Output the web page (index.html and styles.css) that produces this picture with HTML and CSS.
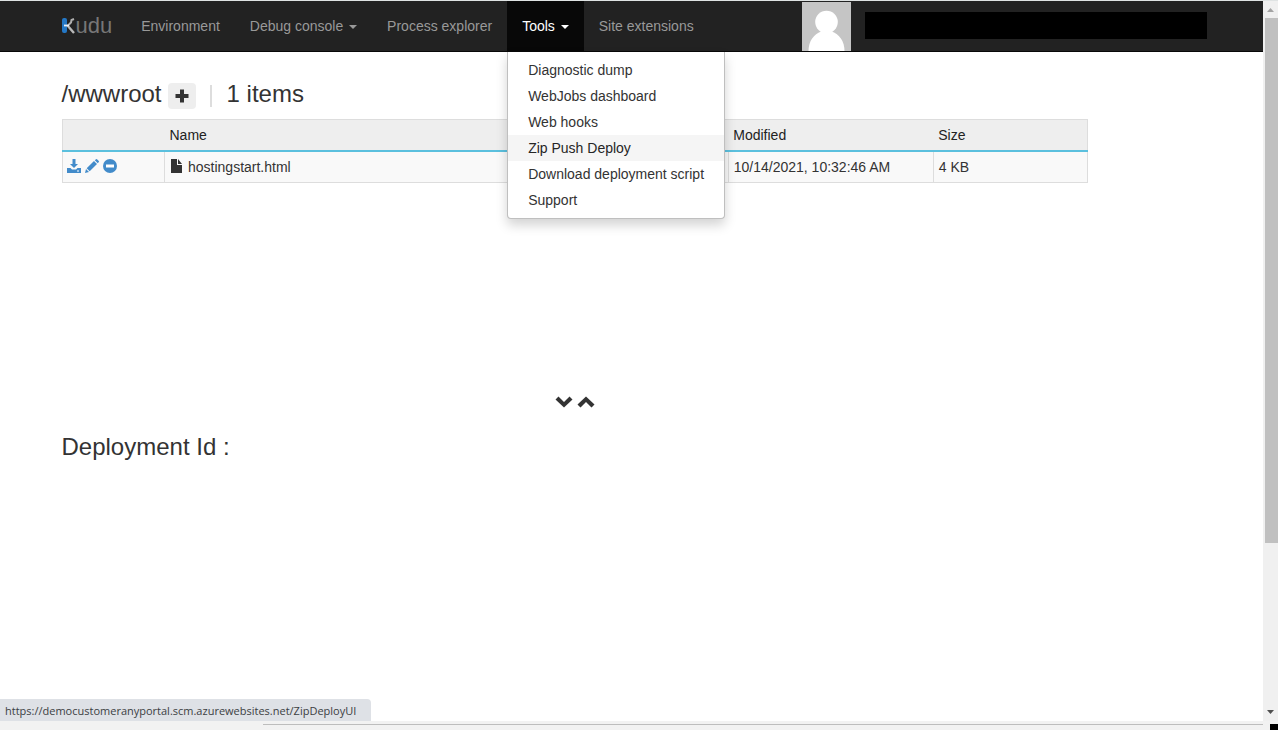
FILE: index.html
```html
<!DOCTYPE html>
<html lang="en">
<head>
<meta charset="utf-8">
<title>Kudu - Zip Push Deploy</title>
<link rel="stylesheet" href="styles.css">
</head>
<body>
<div class="window">
  <div class="viewport">
    <div class="page">
      <header class="navbar">
        <div class="container navbar-inner">
          <a class="brand" href="#" aria-label="Kudu">
            <svg class="brand-k" viewBox="0 0 14 18" aria-hidden="true">
              <rect x="0" y="1" width="5" height="15" rx="2" fill="#2478c6"/>
              <path d="M5.500 9L9 5.500 9.500 3l2.500-1" fill="none" stroke="#b0b0b0" stroke-width="2"/>
              <path d="M5.500 8.500L8.500 12l3.500 4" fill="none" stroke="#b8b8b8" stroke-width="2.400"/>
              <path d="M2 8.500h5" fill="none" stroke="#e8f0f8" stroke-width="1.800"/>
            </svg><span>udu</span>
          </a>
          <nav class="nav">
            <a class="nav-link" href="#">Environment</a>
            <a class="nav-link" href="#">Debug console <span class="caret"></span></a>
            <a class="nav-link" href="#">Process explorer</a>
            <div class="dropdown">
              <a class="nav-link open" href="#">Tools <span class="caret"></span></a>
              <div class="menu">
                <a href="#">Diagnostic dump</a>
                <a href="#">WebJobs dashboard</a>
                <a href="#">Web hooks</a>
                <a class="hovered" href="#">Zip Push Deploy</a>
                <a href="#">Download deployment script</a>
                <a href="#">Support</a>
              </div>
            </div>
            <a class="nav-link" href="#">Site extensions</a>
          </nav>
          <div class="user">
            <svg class="avatar" viewBox="0 0 49 49" aria-hidden="true">
              <rect width="49" height="49" fill="#c5c5c5"/>
              <circle cx="24.500" cy="20" r="11.300" fill="#fff"/>
              <path d="M6.500 49C6.500 39 12 32 19 29.500h11C37 32 42.500 39 42.500 49z" fill="#fff"/>
            </svg>
            <div class="user-name"></div>
          </div>
        </div>
      </header>

      <main class="container">
        <div class="content">
          <section class="files">
            <h1 class="heading">
              <span>/wwwroot</span>
              <button class="add" type="button" aria-label="Add">
                <svg width="14" height="14" viewBox="0 0 14 14"><path d="M5 .500h4V5h4.500v4H9v4.500H5V9H.500V5H5z" fill="#333"/></svg>
              </button>
              <span class="divider"></span>
              <span>1 items</span>
            </h1>
            <table class="table">
              <thead>
                <tr><th class="col-actions"></th><th class="col-name">Name</th><th class="col-modified">Modified</th><th class="col-size">Size</th></tr>
              </thead>
              <tbody>
                <tr>
                  <td class="actions-cell">
                    <div class="actions">
                      <a href="#" aria-label="Download"><svg width="14" height="14" viewBox="0 0 14 14"><path d="M5.500 0h3v5H11L7 9 3 5h2.500zM0 9h3.500L5 10.500h4L10.500 9H14v5H0z"/><path d="M10 11.500h2v1h-2z" fill="#fff"/></svg></a>
                      <a href="#" aria-label="Edit"><svg width="14" height="14" viewBox="0 0 14 14"><path d="M0 14l1-4 3 3zM1.700 9.200l7.300-7.200 3 3-7.300 7.300zM9.800 1.300L11 .200q.500-.400 1 0l1.800 1.800q.400.500 0 1L12.800 4.200z"/></svg></a>
                      <a href="#" aria-label="Delete"><svg width="14" height="14" viewBox="0 0 14 14"><circle cx="7" cy="7" r="7"/><path d="M3 5.500h8v3H3z" fill="#fff"/></svg></a>
                    </div>
                  </td>
                  <td>
                    <div class="file">
                      <svg width="12" height="14" viewBox="0 0 12 14"><path d="M0 0h6v6h5v8H0zM7 0l4 5H7z" fill="#333"/></svg>
                      <span>hostingstart.html</span>
                    </div>
                  </td>
                  <td>10/14/2021, 10:32:46 AM</td>
                  <td>4 KB</td>
                </tr>
              </tbody>
            </table>
          </section>
          <div class="resizer">
            <button type="button" aria-label="Down"><svg width="18" height="12" viewBox="0 0 18 12"><path d="M.500 3.500L3.500.500 9 6l5.500-5.500 3 3L9 11.500z" fill="#333"/></svg></button>
            <button type="button" aria-label="Up"><svg width="18" height="12" viewBox="0 0 18 12"><path d="M.500 8.500l3 3L9 6l5.500 5.500 3-3L9 .500z" fill="#333"/></svg></button>
          </div>
          <h2 class="heading">Deployment Id :</h2>
        </div>
      </main>
      <div class="status">https://democustomeranyportal.scm.azurewebsites.net/ZipDeployUI</div>
    </div>
    <div class="scrollbar">
      <svg width="7" height="4" viewBox="0 0 7 4"><path d="M3.500 0L7 4H0z" fill="#a3a3a3"/></svg>
      <div class="track"><div class="thumb"></div></div>
      <svg width="7" height="4" viewBox="0 0 7 4"><path d="M0 0h7L3.500 4z" fill="#505050"/></svg>
    </div>
  </div>
  <div class="footer"><div class="rule"></div><div class="corner"></div></div>
</div>
</body>
</html>
```

FILE: styles.css
```css
* { box-sizing: border-box; }
body {
  margin: 0;
  color: #333;
  background: #fff;
  font: 14px/20px "Liberation Sans", Arial, sans-serif;
}
a { color: inherit; text-decoration: none; }
button { border: 0; padding: 0; background: none; }
svg { display: block; flex: none; }

.window { display: flex; flex-direction: column; height: 100vh; border-top: 1px solid #dfe3e3; }
.viewport { flex: 1; display: flex; min-height: 0; }
.page { flex: 1; position: relative; }
.container { max-width: 1170px; margin: 0 auto; padding: 0 15px; }

.navbar { background: #222; border-bottom: 1px solid #080808; }
.navbar-inner { display: flex; align-items: center; height: 50px; padding-right: 10px; }
.brand { display: flex; align-items: center; margin-right: 14px; color: #777; font-size: 22px; }
.brand-k { width: 14px; height: 18px; }
.nav { display: flex; }
.nav-link { display: block; padding: 15px; color: #999; white-space: nowrap; }
.nav-link.open { color: #fff; background: #080808; }
.caret {
  display: inline-block;
  margin-left: 2px;
  vertical-align: middle;
  border: 4px solid transparent;
  border-top-color: currentColor;
  border-bottom: 0;
}
.dropdown { position: relative; }
.menu {
  position: absolute;
  top: 100%;
  left: 0;
  z-index: 2;
  margin-top: 1px;
  padding: 5px 0;
  border: 1px solid #bfbfbf;
  border-top: 0;
  border-radius: 0 0 4px 4px;
  background: #fff;
  background-clip: padding-box;
  box-shadow: 0 6px 12px rgba(0, 0, 0, .175);
}
.menu a { display: block; padding: 3px 20px; white-space: nowrap; }
.menu .hovered { background: #f5f5f5; color: #262626; }
.user { display: flex; align-items: center; gap: 14px; margin-left: auto; }
.avatar { width: 49px; height: 49px; }
.user-name { width: 342px; height: 27px; margin-bottom: 2px; background: #000; }

.content { width: 90%; }
.files { min-height: 330px; padding-top: 27px; }
.heading { display: flex; align-items: center; margin: 0; font-size: 24px; line-height: 28px; font-weight: 400; }
.add {
  display: grid;
  place-items: center;
  width: 28px;
  height: 26px;
  margin: 4px 14px 0 6px;
  border-radius: 4px;
  background: #eee;
}
.divider { width: 2px; height: 22px; margin: 4px 15px 0 0; background: #ddd; }
.table { width: 100%; margin-top: 10px; table-layout: fixed; border-collapse: collapse; }
.table th, .table td { padding: 5px; text-align: left; }
.table th { height: 31px; font-weight: 400; color: #222; background: #eee; border-top: 1px solid #ddd; border-bottom: 2px solid #5bc0de; }
.table th:first-child { border-left: 1px solid #ddd; }
.table th:last-child { border-right: 1px solid #ddd; }
.table td { background: #f9f9f9; border: 1px solid #ddd; }
.table .actions-cell { padding: 4px; }
.col-actions { width: 10%; }
.col-name { width: 55%; }
.col-modified { width: 20%; }
.col-size { width: 15%; }
.actions { display: flex; gap: 4px; padding-bottom: 2px; fill: #428bca; }
.file { display: flex; align-items: center; gap: 5px; padding-left: 1px; }
.file svg { margin-bottom: 2px; }

.resizer { display: flex; justify-content: center; gap: 4px; padding: 14px 0 25px; }

.status {
  position: absolute;
  left: 0;
  bottom: 0;
  padding: 2px 15px 0 5px;
  border-radius: 0 4px 0 0;
  background: #dee1e6;
  color: #3c4043;
  font: 11px/20px "Open Sans", "Noto Sans", sans-serif;
}
.scrollbar {
  display: flex;
  flex-direction: column;
  align-items: center;
  gap: 6px;
  width: 15px;
  padding: 7px 0;
  background: #f0f0f0;
}
.track { flex: 1; width: 100%; padding-left: 2px; }
.thumb { height: 76.5%; background: #c0c0c0; }
.footer { display: flex; justify-content: space-between; height: 9px; padding-top: 3px; background: #f2f2f2; }
.rule { flex: 1; height: 1px; margin: 0 7px 0 263px; background: #bdbdbd; }
.corner { width: 8px; background: #000; }
```
